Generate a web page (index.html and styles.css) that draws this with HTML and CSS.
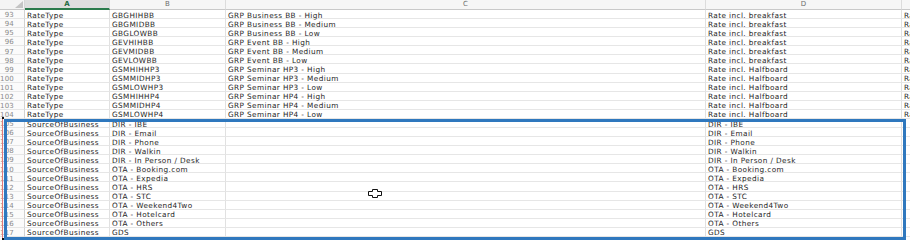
FILE: index.html
```html
<!DOCTYPE html>
<html>
<head>
<meta charset="utf-8">
<link rel="stylesheet" href="styles.css">
</head>
<body>
<div class="page">
  <div class="sheet">
    <div class="corner"><span class="tri"></span></div>
    <div class="colhead active">A</div>
    <div class="colhead">B</div>
    <div class="colhead">C</div>
    <div class="colhead">D</div>
    <div class="colhead"></div>

    <div class="rh">93</div><div class="c">RateType</div><div class="c">GBGHIHBB</div><div class="c">GRP Business BB - High</div><div class="c">Rate incl. breakfast</div><div class="c">Rate</div>
    <div class="rh">94</div><div class="c">RateType</div><div class="c">GBGMIDBB</div><div class="c">GRP Business BB - Medium</div><div class="c">Rate incl. breakfast</div><div class="c">Rate</div>
    <div class="rh">95</div><div class="c">RateType</div><div class="c">GBGLOWBB</div><div class="c">GRP Business BB - Low</div><div class="c">Rate incl. breakfast</div><div class="c">Rate</div>
    <div class="rh">96</div><div class="c">RateType</div><div class="c">GEVHIHBB</div><div class="c">GRP Event BB - High</div><div class="c">Rate incl. breakfast</div><div class="c">Rate</div>
    <div class="rh">97</div><div class="c">RateType</div><div class="c">GEVMIDBB</div><div class="c">GRP Event BB - Medium</div><div class="c">Rate incl. breakfast</div><div class="c">Rate</div>
    <div class="rh">98</div><div class="c">RateType</div><div class="c">GEVLOWBB</div><div class="c">GRP Event BB - Low</div><div class="c">Rate incl. breakfast</div><div class="c">Rate</div>
    <div class="rh">99</div><div class="c">RateType</div><div class="c">GSMHIHHP3</div><div class="c">GRP Seminar HP3 - High</div><div class="c">Rate incl. Halfboard</div><div class="c">Rate</div>
    <div class="rh">100</div><div class="c">RateType</div><div class="c">GSMMIDHP3</div><div class="c">GRP Seminar HP3 - Medium</div><div class="c">Rate incl. Halfboard</div><div class="c">Rate</div>
    <div class="rh">101</div><div class="c">RateType</div><div class="c">GSMLOWHP3</div><div class="c">GRP Seminar HP3 - Low</div><div class="c">Rate incl. Halfboard</div><div class="c">Rate</div>
    <div class="rh">102</div><div class="c">RateType</div><div class="c">GSMHIHHP4</div><div class="c">GRP Seminar HP4 - High</div><div class="c">Rate incl. Halfboard</div><div class="c">Rate</div>
    <div class="rh">103</div><div class="c">RateType</div><div class="c">GSMMIDHP4</div><div class="c">GRP Seminar HP4 - Medium</div><div class="c">Rate incl. Halfboard</div><div class="c">Rate</div>
    <div class="rh">104</div><div class="c">RateType</div><div class="c">GSMLOWHP4</div><div class="c">GRP Seminar HP4 - Low</div><div class="c">Rate incl. Halfboard</div><div class="c">Rate</div>

    <div class="rh">105</div><div class="c">SourceOfBusiness</div><div class="c">DIR - IBE</div><div class="c"></div><div class="c">DIR - IBE</div><div class="c"></div>
    <div class="rh">106</div><div class="c">SourceOfBusiness</div><div class="c">DIR - Email</div><div class="c"></div><div class="c">DIR - Email</div><div class="c"></div>
    <div class="rh">107</div><div class="c">SourceOfBusiness</div><div class="c">DIR - Phone</div><div class="c"></div><div class="c">DIR - Phone</div><div class="c"></div>
    <div class="rh">108</div><div class="c">SourceOfBusiness</div><div class="c">DIR - Walkin</div><div class="c"></div><div class="c">DIR - Walkin</div><div class="c"></div>
    <div class="rh">109</div><div class="c">SourceOfBusiness</div><div class="c">DIR - In Person / Desk</div><div class="c"></div><div class="c">DIR - In Person / Desk</div><div class="c"></div>
    <div class="rh">110</div><div class="c">SourceOfBusiness</div><div class="c">OTA - Booking.com</div><div class="c"></div><div class="c">OTA - Booking.com</div><div class="c"></div>
    <div class="rh">111</div><div class="c">SourceOfBusiness</div><div class="c">OTA - Expedia</div><div class="c"></div><div class="c">OTA - Expedia</div><div class="c"></div>
    <div class="rh">112</div><div class="c">SourceOfBusiness</div><div class="c">OTA - HRS</div><div class="c"></div><div class="c">OTA - HRS</div><div class="c"></div>
    <div class="rh">113</div><div class="c">SourceOfBusiness</div><div class="c">OTA - STC</div><div class="c"></div><div class="c">OTA - STC</div><div class="c"></div>
    <div class="rh">114</div><div class="c">SourceOfBusiness</div><div class="c">OTA - Weekend4Two</div><div class="c"></div><div class="c">OTA - Weekend4Two</div><div class="c"></div>
    <div class="rh">115</div><div class="c">SourceOfBusiness</div><div class="c">OTA - Hotelcard</div><div class="c"></div><div class="c">OTA - Hotelcard</div><div class="c"></div>
    <div class="rh">116</div><div class="c">SourceOfBusiness</div><div class="c">OTA - Others</div><div class="c"></div><div class="c">OTA - Others</div><div class="c"></div>
    <div class="rh">117</div><div class="c">SourceOfBusiness</div><div class="c">GDS</div><div class="c"></div><div class="c">GDS</div><div class="c"></div>
  </div>

  <div class="mark-line"></div>
  <div class="mark-dot top"></div>
  <div class="mark-dot bottom"></div>
  <div class="selection"></div>
  <svg class="cursor" width="14" height="9" viewBox="0 0 14 9">
    <polygon points="4.5,0.5 9.5,0.5 9.5,2.5 13.5,2.5 13.5,6.5 9.5,6.5 9.5,8.5 4.5,8.5 4.5,6.5 0.5,6.5 0.5,2.5 4.5,2.5" fill="#ffffff" stroke="#111111" stroke-width="1"/>
  </svg>
</div>
</body>
</html>
```

FILE: styles.css
```css
html, body {
  margin: 0;
  padding: 0;
  background: #ffffff;
  overflow: hidden;
}

.page {
  position: relative;
  width: 910px;
  height: 244px;
  overflow: hidden;
  font-family: "DejaVu Sans", "Liberation Sans", sans-serif;
}

.sheet {
  display: grid;
  grid-template-columns: 25px 85px 116px 480px 196px 40px;
  grid-template-rows: 10px repeat(25, 9.08px);
}

.corner {
  background: #f4f4f4;
  border-right: 1px solid #d6d6d6;
  border-bottom: 1px solid #c9c9c9;
  box-sizing: border-box;
  display: flex;
  justify-content: flex-end;
  align-items: flex-end;
  padding: 0 1px 1px 0;
}

.tri {
  width: 0;
  height: 0;
  border-left: 8px solid transparent;
  border-bottom: 7px solid #c4c4c4;
}

.colhead {
  background: #f6f6f6;
  border-right: 1px solid #dcdcdc;
  border-bottom: 1px solid #c9c9c9;
  box-sizing: border-box;
  font-size: 7px;
  line-height: 9px;
  color: #6e6e6e;
  text-align: center;
  overflow: hidden;
}

.colhead.active {
  background: #dedede;
  color: #1c6b3f;
  font-weight: bold;
  border-bottom: 2px solid #2a7a4b;
  line-height: 8px;
}

.rh {
  background: #fbfbfb;
  border-right: 1px solid #d2d2d2;
  border-bottom: 1px solid #e6e6e6;
  box-sizing: border-box;
  font-size: 7px;
  line-height: 8px;
  padding-top: 1.2px;
  letter-spacing: 0.2px;
  color: #8a8a8a;
  text-align: right;
  padding-right: 10px;
  white-space: nowrap;
}

.c {
  border-right: 1px solid #e1e1e1;
  border-bottom: 1px solid #e6e6e6;
  box-sizing: border-box;
  font-size: 7.3px;
  line-height: 8px;
  padding-top: 1.6px;
  letter-spacing: 0.4px;
  color: #1e1e1e;
  padding-left: 2px;
  white-space: nowrap;
}

.selection {
  position: absolute;
  left: 4px;
  top: 119px;
  width: 902px;
  height: 121px;
  border: 3px solid #2f78be;
  box-sizing: border-box;
}

.mark-line {
  position: absolute;
  left: 2px;
  top: 119px;
  width: 1px;
  height: 121px;
  background: #e07a7a;
}

.mark-dot {
  position: absolute;
  left: 2px;
  width: 2px;
  height: 2px;
  background: #111111;
}

.mark-dot.top {
  top: 117px;
}

.mark-dot.bottom {
  top: 238px;
}

.cursor {
  position: absolute;
  left: 368px;
  top: 189px;
}
```
